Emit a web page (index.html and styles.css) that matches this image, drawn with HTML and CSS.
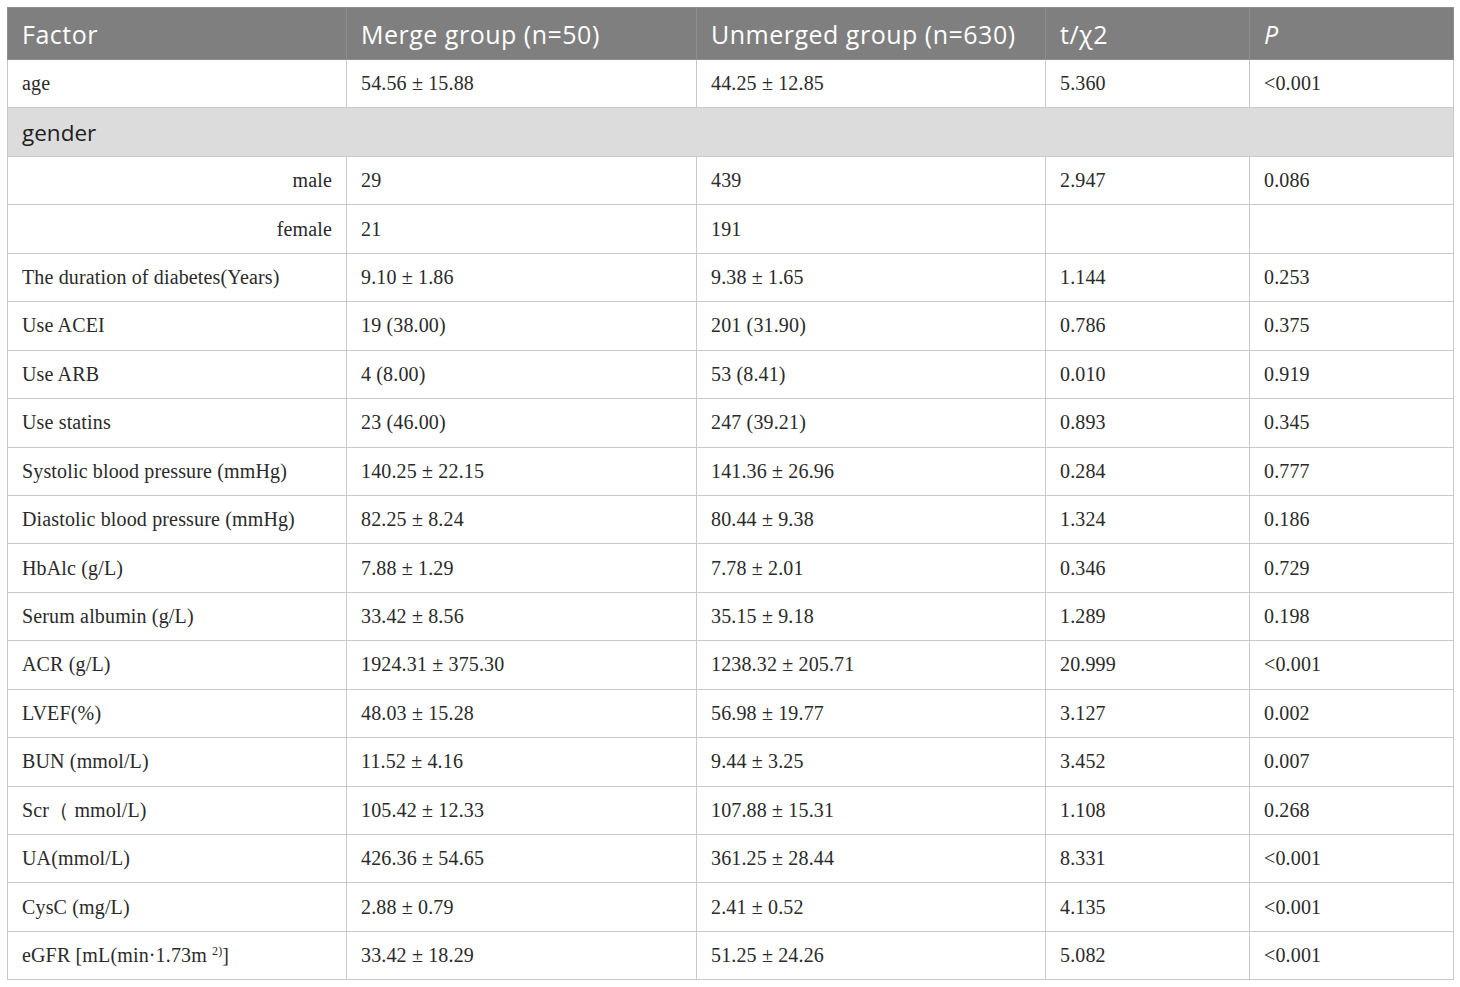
FILE: index.html
```html
<!DOCTYPE html>
<html>
<head>
<meta charset="utf-8">
<link rel="stylesheet" href="styles.css">
</head>
<body>
<table class="data">
  <colgroup>
    <col class="c1"><col class="c2"><col class="c3"><col class="c4"><col class="c5">
  </colgroup>
  <thead>
    <tr><th>Factor</th><th>Merge group (n=50)</th><th>Unmerged group (n=630)</th><th>t/χ2</th><th><i>P</i></th></tr>
  </thead>
  <tbody>
    <tr><td>age</td><td>54.56 ± 15.88</td><td>44.25 ± 12.85</td><td>5.360</td><td>&lt;0.001</td></tr>
    <tr class="group"><td colspan="5">gender</td></tr>
    <tr><td class="right">male</td><td>29</td><td>439</td><td>2.947</td><td>0.086</td></tr>
    <tr><td class="right">female</td><td>21</td><td>191</td><td></td><td></td></tr>
    <tr><td>The duration of diabetes(Years)</td><td>9.10 ± 1.86</td><td>9.38 ± 1.65</td><td>1.144</td><td>0.253</td></tr>
    <tr><td>Use ACEI</td><td>19 (38.00)</td><td>201 (31.90)</td><td>0.786</td><td>0.375</td></tr>
    <tr><td>Use ARB</td><td>4 (8.00)</td><td>53 (8.41)</td><td>0.010</td><td>0.919</td></tr>
    <tr><td>Use statins</td><td>23 (46.00)</td><td>247 (39.21)</td><td>0.893</td><td>0.345</td></tr>
    <tr><td>Systolic blood pressure (mmHg)</td><td>140.25 ± 22.15</td><td>141.36 ± 26.96</td><td>0.284</td><td>0.777</td></tr>
    <tr><td>Diastolic blood pressure (mmHg)</td><td>82.25 ± 8.24</td><td>80.44 ± 9.38</td><td>1.324</td><td>0.186</td></tr>
    <tr><td>HbAlc (g/L)</td><td>7.88 ± 1.29</td><td>7.78 ± 2.01</td><td>0.346</td><td>0.729</td></tr>
    <tr><td>Serum albumin (g/L)</td><td>33.42 ± 8.56</td><td>35.15 ± 9.18</td><td>1.289</td><td>0.198</td></tr>
    <tr><td>ACR (g/L)</td><td>1924.31 ± 375.30</td><td>1238.32 ± 205.71</td><td>20.999</td><td>&lt;0.001</td></tr>
    <tr><td>LVEF(%)</td><td>48.03 ± 15.28</td><td>56.98 ± 19.77</td><td>3.127</td><td>0.002</td></tr>
    <tr><td>BUN (mmol/L)</td><td>11.52 ± 4.16</td><td>9.44 ± 3.25</td><td>3.452</td><td>0.007</td></tr>
    <tr><td>Scr（ mmol/L)</td><td>105.42 ± 12.33</td><td>107.88 ± 15.31</td><td>1.108</td><td>0.268</td></tr>
    <tr><td>UA(mmol/L)</td><td>426.36 ± 54.65</td><td>361.25 ± 28.44</td><td>8.331</td><td>&lt;0.001</td></tr>
    <tr><td>CysC (mg/L)</td><td>2.88 ± 0.79</td><td>2.41 ± 0.52</td><td>4.135</td><td>&lt;0.001</td></tr>
    <tr><td>eGFR [mL(min·1.73m <sup>2)</sup>]</td><td>33.42 ± 18.29</td><td>51.25 ± 24.26</td><td>5.082</td><td>&lt;0.001</td></tr>
  </tbody>
</table>
</body>
</html>
```

FILE: styles.css
```css
html, body {
  margin: 0;
  padding: 0;
  background: #ffffff;
}
body {
  padding: 7px 7px 0 7px;
}
.data {
  border-collapse: collapse;
  width: 1446px;
  table-layout: fixed;
  font-family: "Liberation Serif", "Times New Roman", serif;
  font-size: 20px;
  letter-spacing: 0.15px;
  color: #2a2a2a;
}
.c1 { width: 339px; }
.c2 { width: 350px; }
.c3 { width: 349px; }
.c4 { width: 204px; }
.c5 { width: 204px; }
.data th, .data td {
  border: 1px solid #c9c9c9;
  padding: 0 14px;
  text-align: left;
  vertical-align: middle;
}
.data th {
  background: #7e7f7e;
  color: #ffffff;
  font-family: "Open Sans", "Noto Sans", sans-serif;
  font-weight: 400;
  font-size: 25px;
  letter-spacing: 0.5px;
  height: 51px;
  border-color: #8f8f8f;
}
.data th i {
  font-style: italic;
}
.data td {
  height: 47.45px;
}
.data td.right {
  text-align: right;
}
.data tr.group td {
  background: #dcdcdc;
  font-family: "Open Sans", "Noto Sans", sans-serif;
  font-size: 22.5px;
  letter-spacing: 0;
  color: #1e1e1e;
}
.data sup {
  font-size: 12px;
  vertical-align: 7px;
  line-height: 0;
}
```
